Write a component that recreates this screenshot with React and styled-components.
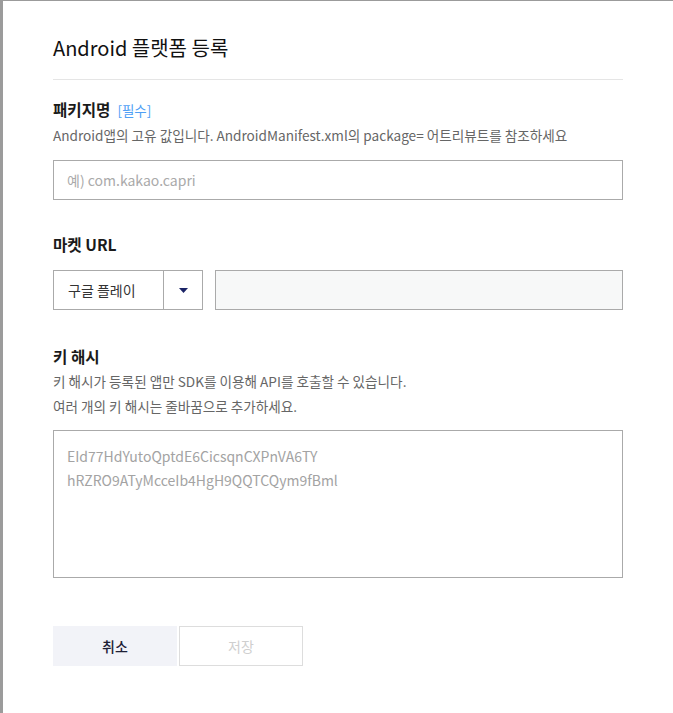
import React from "react";
import styled, { createGlobalStyle } from "styled-components";

const Global = createGlobalStyle`
  html, body { margin: 0; padding: 0; }
  body {
    background: #9b9b9b;
    font-family: "Noto Sans CJK KR", "Noto Sans", sans-serif;
    overflow: hidden;
  }
`;

const Dialog = styled.div`
  margin: 1px 0 0 3px;
  height: 712px;
  background: #ffffff;
  box-sizing: border-box;
  padding: 30px 50px 0 50px;
  display: flex;
  flex-direction: column;
`;

const Title = styled.h1`
  margin: 0;
  font-size: 20px;
  font-weight: 400;
  color: #111;
  line-height: 34px;
  padding-bottom: 14px;
  border-bottom: 1px solid #e5e5e5;
  width: 570px;
`;

const Section = styled.section`
  display: flex;
  flex-direction: column;
  width: 570px;
  margin-top: ${(p) => p.$top}px;
`;

const Label = styled.div`
  font-size: 15.6px;
  font-weight: 700;
  color: #1a1a1a;
  line-height: 22px;
  display: flex;
  align-items: baseline;
  gap: 7px;
`;

const Required = styled.span`
  font-size: 13.5px;
  font-weight: 400;
  color: #4f9ff5;
`;

const Desc = styled.p`
  margin: 2px 0 0;
  font-size: 13.6px;
  color: #666;
  line-height: 25px;
`;

const TextInput = styled.div`
  box-sizing: border-box;
  margin-top: 12px;
  height: 40px;
  border: 1px solid #aaaaaa;
  padding: 0 13px;
  display: flex;
  align-items: center;
  font-size: 14px;
  color: #aaaaaa;
`;

const Row = styled.div`
  display: flex;
  gap: 12px;
  margin-top: 15px;
`;

const Select = styled.div`
  box-sizing: border-box;
  width: 150px;
  height: 40px;
  border: 1px solid #aaaaaa;
  display: flex;
`;

const SelectValue = styled.div`
  flex: 1;
  display: flex;
  align-items: center;
  padding-left: 14px;
  font-size: 14px;
  color: #333;
  border-right: 1px solid #aaaaaa;
`;

const SelectArrow = styled.div`
  width: 38px;
  display: flex;
  align-items: center;
  justify-content: center;
`;

const UrlInput = styled.div`
  box-sizing: border-box;
  flex: 1;
  height: 40px;
  border: 1px solid #aaaaaa;
  background: #f7f8f8;
`;

const TextArea = styled.div`
  box-sizing: border-box;
  margin-top: 11px;
  height: 148px;
  border: 1px solid #aaaaaa;
  padding: 13px 13px;
  font-size: 14px;
  line-height: 24px;
  color: #a3a3a3;
`;

const Buttons = styled.div`
  display: flex;
  gap: 2px;
  margin-top: 48px;
`;

const Button = styled.button`
  box-sizing: border-box;
  width: 124px;
  height: 40px;
  font-family: inherit;
  font-size: 14px;
  font-weight: ${(p) => (p.$primary ? 500 : 400)};
  color: ${(p) => (p.$primary ? "#1e2035" : "#cfcfcf")};
  background: ${(p) => (p.$primary ? "#f2f3f8" : "#ffffff")};
  border: ${(p) => (p.$primary ? "none" : "1px solid #dddddd")};
  cursor: pointer;
  padding: 0;
`;

export default function App() {
  return (
    <>
      <Global />
      <Dialog>
        <Title>Android 플랫폼 등록</Title>
        <Section $top={18}>
          <Label>
            패키지명 <Required>[필수]</Required>
          </Label>
          <Desc>
            Android앱의 고유 값입니다. AndroidManifest.xml의 package= 어트리뷰트를 참조하세요
          </Desc>
          <TextInput>예) com.kakao.capri</TextInput>
        </Section>
        <Section $top={33}>
          <Label>마켓 URL</Label>
          <Row>
            <Select>
              <SelectValue>구글 플레이</SelectValue>
              <SelectArrow>
                <svg width="9" height="5" viewBox="0 0 9 5">
                  <path d="M0 0 L9 0 L4.5 5 Z" fill="#1a2366" />
                </svg>
              </SelectArrow>
            </Select>
            <UrlInput />
          </Row>
        </Section>
        <Section $top={35}>
          <Label>키 해시</Label>
          <Desc>
            키 해시가 등록된 앱만 SDK를 이용해 API를 호출할 수 있습니다.
            <br />
            여러 개의 키 해시는 줄바꿈으로 추가하세요.
          </Desc>
          <TextArea>
            EId77HdYutoQptdE6CicsqnCXPnVA6TY
            <br />
            hRZRO9ATyMcceIb4HgH9QQTCQym9fBml
          </TextArea>
        </Section>
        <Buttons>
          <Button $primary>취소</Button>
          <Button disabled>저장</Button>
        </Buttons>
      </Dialog>
    </>
  );
}
